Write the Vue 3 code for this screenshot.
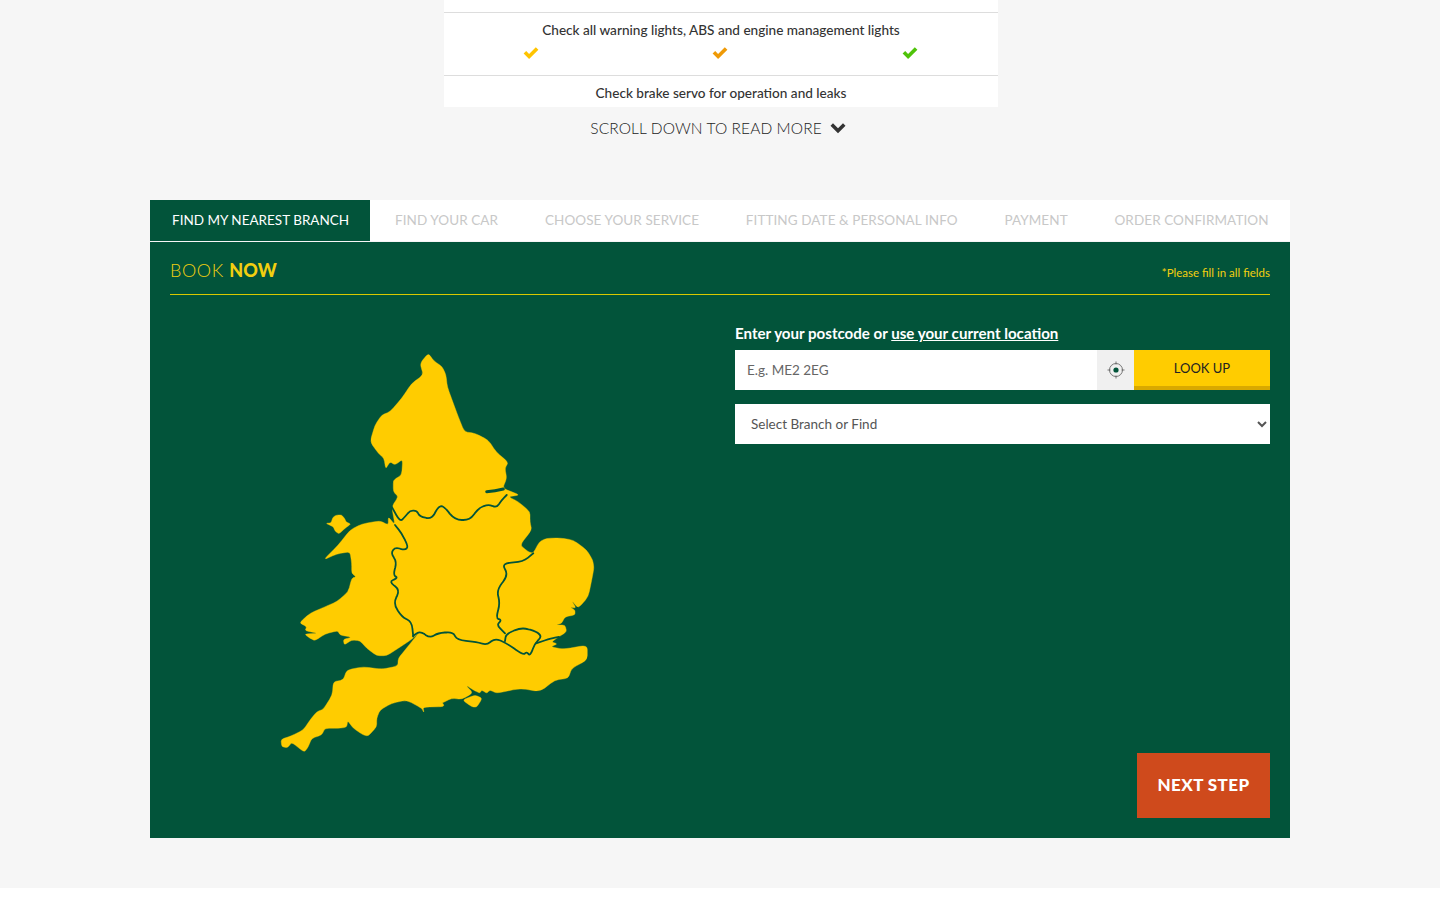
<template>
  <div class="page">
    <div class="compare-table">
      <div class="compare-row first"></div>
      <div v-for="row in rows" :key="row.label" class="compare-row">
        <div class="row-label">{{ row.label }}</div>
        <div v-if="row.ticks" class="row-ticks">
          <svg v-for="colour in tickColours" :key="colour" class="tick" viewBox="0 0 16 13">
            <path d="M.6 6.6 L3.2 4 L6.1 6.9 L12.8 .2 L15.4 2.8 L6.1 12.1 Z" :fill="colour" />
          </svg>
        </div>
      </div>
    </div>

    <div class="scroll-more">
      <span>SCROLL DOWN TO READ MORE</span>
      <svg class="scroll-chevron" viewBox="0 0 16 12">
        <path d="M.5 3.8 L3 1.3 L8 6.3 L13 1.3 L15.5 3.8 L8 11.3 Z" fill="#333" />
      </svg>
    </div>

    <div class="booking">
      <div class="tabs">
        <div v-for="(tab, index) in tabs" :key="tab" class="tab" :class="{ active: index === 0 }">{{ tab }}</div>
      </div>

      <div class="panel">
        <div class="panel-header">
          <h2 class="panel-title">BOOK <b>NOW</b></h2>
          <span class="panel-note">*Please fill in all fields</span>
        </div>

        <div class="panel-body">
          <div class="map-col">
            <!-- viewBox is in page pixels so the outline can be read straight off the reference -->
            <svg class="map" viewBox="270 340 340 420">
              <path v-for="(d, i) in landPaths" :key="i" class="land" :d="d" />
              <g class="borders">
                <path v-for="(d, i) in borderPaths" :key="i" :d="d" />
                <path class="humber" d="M486.7 491.7 Q495 491 503.3 489" />
              </g>
            </svg>
          </div>

          <div class="form-col">
            <label class="postcode-label">Enter your postcode or <u>use your current location</u></label>
            <div class="postcode-row">
              <input class="postcode-input" type="text" placeholder="E.g. ME2 2EG" />
              <div class="locate">
                <svg viewBox="0 0 20 20" width="20" height="20">
                  <circle cx="10" cy="10" r="6.5" fill="none" stroke="#666" stroke-width=".9" />
                  <circle cx="10" cy="10" r="2.6" fill="#02543a" />
                  <path d="M10 1.5 V4.5 M10 15.5 V18.5 M1.5 10 H4.5 M15.5 10 H18.5" stroke="#666" stroke-width=".9" />
                </svg>
              </div>
              <button class="lookup" type="button">LOOK UP</button>
            </div>
            <select class="branch-select">
              <option>Select Branch or Find</option>
            </select>
            <button class="next-step" type="button">NEXT STEP</button>
          </div>
        </div>
      </div>
    </div>

    <div class="footer"></div>
  </div>
</template>

<script setup>
const rows = [
  { label: 'Check all warning lights, ABS and engine management lights', ticks: true },
  { label: 'Check brake servo for operation and leaks', ticks: false }
]

const tickColours = ['#ffc400', '#ef9a07', '#4fc30a']

const tabs = [
  'FIND MY NEAREST BRANCH',
  'FIND YOUR CAR',
  'CHOOSE YOUR SERVICE',
  'FITTING DATE & PERSONAL INFO',
  'PAYMENT',
  'ORDER CONFIRMATION'
]

// map points in page pixels
const mainland = '428.3 353.3 434 361 442.3 366.7 446 375 447.3 386.7 453.3 403.3 458.3 416.7 464.3 431.7 475 433.3 488.3 440 496 451.7 508.3 462.3 505 468.3 506.7 478.3 502.7 488.3 520 495 508.3 496.7 518.3 501.7 530 511.7 530 521.7 531.7 530 520 545 528.3 551.7 533.3 553.3 539.3 541.7 546.7 538.3 560 538 573.3 540 586.7 550 592.7 560 594 568 591.7 580 588.3 596.7 578.3 608.3 571.7 600.7 576 608 570 607.3 575 610 575 615 565 616.7 561.7 623.3 556 625 565 625 566.7 631.7 558.3 637.3 551.7 641.7 557.3 644 550.7 646.7 563.3 649.3 587.3 645 587.3 660 571.7 668.3 568.3 678.3 555 680 540 691.7 520 688.3 496.7 693.3 490 690 486.7 693.3 481.7 690 480 693 475 691 465.7 685 473 693 461.7 699.3 451.7 698.3 441.7 703.3 440 699.3 445 706.7 423 707 424 712.7 421.7 708.3 406.7 700 391.7 703.3 380 710 376.7 718.3 376.7 726.7 368.3 736 363.3 735 353.3 728.3 347.7 720.7 346.7 727.3 338.3 728.3 325 728.3 321.7 735 311.7 738.3 308.3 746.7 304.3 752.3 291.7 742.3 287.7 747.7 281.7 746.7 281 739.3 291 736 303.3 730 310 720 316.7 711.7 323.3 709.3 332.3 695 333.3 681.7 343.3 680 346.7 670 363.3 666.7 381.7 669.3 397.7 666 398.3 658.3 405 650 411.7 641.7 421 630 413.3 638.3 398.3 648.3 386.7 655.7 376.7 655.7 366.7 648.3 360 640.7 351.7 640 344.3 645 343.3 639.3 351.7 637.3 340 635 337.7 630.7 325 634 315 640.7 310 638.3 304.3 634 317.7 633.3 305 630.7 306.7 626.7 299.3 622.7 310 613.3 325 606.7 336.7 601.7 348.3 591.7 351.7 578.3 356 576.7 351.7 573.3 351.7 563.3 350 551.7 336.7 554 323.3 560 338.3 545 350 530 361.7 524 380 520.7 388.3 525 388.3 516.7 395 525 391.7 506.7 398.3 496.7 393.3 491.7 393.3 480 401.7 475 402.7 459.3 395 465 390 461.7 385.7 469 384 458.3 378.3 453.3 370 441.7 375 425 381.7 415 390 411.7 401.7 398.3 411.7 383.3 423.3 375 420 363.3'
const anglesey = '325.7 523.3 331 523 333 517 337 515 341.7 515 345 519 346 522 351 524 345 528.3 339 534 335 531 333.3 526.7'
const wight = '462.3 700 475 695 482.3 698.3 476.7 707.3 471.7 706.7'

const borders = [
  '391.7 506.7 400 521.7 405 516.7 410 510.7 416.7 510.7 420 516.7 431.7 519 438.3 506.7 443.3 505.7 455 520 470 520 478.3 508.3 488.3 504.3 496.7 507.7 501.7 500 506.7 495',
  '395 525 401.7 533.3 408.3 546.7 405 550 395 547.3 391 553.3 396.7 561.7 393.3 575 398 578 389 581.7 400 590 393.3 603.3 401.7 616.7 411.7 621.7 413.3 636.7',
  '413 636 420 631 430 638 438 633 453 632 457 640 477 642 486.7 645 495 638.3 506.7 643.3 523.3 655 526.7 651.7 530 656 535 643.3 541.7 636.7 536.7 631.7 521.7 627.3 506 634 505 641',
  '533.3 553.3 523.3 561.7 501.7 563.3 508.3 575 496.7 590 500 603.3 496 618.3 501.7 620 496.7 625 505 633.3',
  '536 643.3 551.7 638.3 559 637'
]

// rounds each corner a little: the reference outline is soft, not polygonal
function roundedPath(list, closed, cut = 0.3) {
  const nums = list.split(' ').map(Number)
  const pts = []
  for (let i = 0; i < nums.length; i += 2) pts.push([nums[i], nums[i + 1]])
  const toward = (a, b, t) => [a[0] + (b[0] - a[0]) * t, a[1] + (b[1] - a[1]) * t]
  const fmt = p => p[0].toFixed(1) + ' ' + p[1].toFixed(1)
  const n = pts.length
  let d = ''
  pts.forEach((p, i) => {
    if (!closed && (i === 0 || i === n - 1)) {
      d += (i === 0 ? 'M' : 'L') + fmt(p) + ' '
      return
    }
    const before = toward(p, pts[(i - 1 + n) % n], cut)
    const after = toward(p, pts[(i + 1) % n], cut)
    d += (d ? 'L' : 'M') + fmt(before) + ' Q' + fmt(p) + ' ' + fmt(after) + ' '
  })
  return d + (closed ? 'Z' : '')
}

const landPaths = [mainland, anglesey, wight].map(p => roundedPath(p, true))
const borderPaths = borders.map(p => roundedPath(p, false, 0.45))
</script>

<style>
html, body {
  margin: 0;
  background: #fff;
}
</style>

<style scoped>
.page {
  font-family: Lato, "Liberation Sans", sans-serif;
  color: #333;
  height: 900px;
  overflow: hidden;
  background: #f6f6f6;
  display: flex;
  flex-direction: column;
  align-items: center;
}

/* comparison table */
.compare-table {
  width: 554px;
  height: 107px;
  margin-left: 2px;
  background: #fff;
  overflow: hidden;
  flex-shrink: 0;
}

.compare-row {
  height: 54px;
  border-bottom: 1px solid #ddd;
  padding-top: 8px;
  text-align: center;
}

.compare-row.first {
  height: 12px;
  padding: 0;
}

.row-label {
  font-size: 13.6px;
  line-height: 18px;
  font-weight: 500;
  color: #333;
}

.row-ticks {
  display: grid;
  grid-template-columns: repeat(3, 1fr);
  justify-items: center;
  width: 569px;
  margin: 8px 0 0 -8px;
}

.tick {
  width: 16px;
  height: 13px;
}

.scroll-more {
  height: 42px;
  display: flex;
  align-items: center;
  gap: 8px;
  font-size: 15.5px;
  font-weight: 300;
  letter-spacing: .1px;
  color: #222;
  margin: 0 4px 51px 0;
  flex-shrink: 0;
  padding-bottom: 1px;
  box-sizing: border-box;
}

.scroll-chevron {
  width: 16px;
  height: 12px;
}

/* booking */
.booking {
  width: 1140px;
  flex-shrink: 0;
}

.tabs {
  display: flex;
  background: #fff;
  height: 41px;
  margin-bottom: 1px;
}

.tab {
  padding: 0 23.4px;
  font-size: 13.5px;
  letter-spacing: .08px;
  line-height: 40px;
  color: #c8c8c8;
  white-space: nowrap;
}

.tab.active {
  background: #02543a;
  color: #fff;
  padding: 0 22px;
  width: 176px;
  margin-right: 1.6px;
  letter-spacing: 0;
}

.panel {
  background: #02543a;
  padding: 0 20px 20px;
  height: 596px;
  box-sizing: border-box;
}

.panel-header {
  height: 53px;
  border-bottom: 1px solid #d8c800;
  box-sizing: border-box;
  display: flex;
  justify-content: space-between;
  align-items: center;
  padding-top: 4px;
}

.panel-title {
  margin: 0;
  font-size: 18px;
  font-weight: 300;
  letter-spacing: .6px;
  color: #f2cf10;
}

.panel-title b {
  font-weight: 900;
  letter-spacing: .2px;
}

.panel-note {
  font-size: 11.5px;
  color: #f2cf10;
  padding-top: 4px;
}

.panel-body {
  display: flex;
  height: 523px;
}

.map-col {
  width: 565px;
  flex-shrink: 0;
}

.map {
  display: block;
  width: 340px;
  height: 420px;
  margin: 45px 0 0 100px;
}

.land {
  fill: #ffcc00;
  stroke: #ffcc00;
  stroke-width: .4;
  stroke-linejoin: round;
}

.borders path {
  fill: none;
  stroke: #02543a;
  stroke-width: 1.8;
  stroke-linejoin: round;
  stroke-linecap: round;
}

.borders .humber {
  stroke-width: 3;
}

.form-col {
  flex: 1;
  display: flex;
  flex-direction: column;
}

.postcode-label {
  margin-top: 28px;
  height: 27px;
  line-height: 20px;
  font-size: 15.1px;
  font-weight: 700;
  color: #fff;
}

.postcode-row {
  display: flex;
  height: 40px;
}

.postcode-input {
  flex: 1;
  min-width: 0;
  border: 0;
  outline: 0;
  padding: 0 12px;
  font-family: inherit;
  font-size: 13.5px;
  background: #fff;
  color: #555;
}

.postcode-input::placeholder {
  color: #666;
  opacity: 1;
}

.locate {
  width: 37px;
  background: #f0f0f0;
  display: flex;
  align-items: center;
  justify-content: center;
}

.lookup {
  width: 136px;
  border: 0;
  border-bottom: 4px solid #d9a900;
  background: #ffcc00;
  font-family: inherit;
  font-size: 13px;
  color: #222;
  padding: 0;
}

.branch-select {
  margin-top: 14px;
  height: 40px;
  border: 0;
  border-radius: 0;
  outline: 0;
  background: #fff;
  padding: 0 12px;
  font-family: inherit;
  font-size: 13.5px;
  color: #555;
}

.next-step {
  margin-top: auto;
  align-self: flex-end;
  width: 133px;
  height: 65px;
  border: 0;
  background: #cf4a1c;
  color: #fff;
  font-family: inherit;
  font-size: 17px;
  letter-spacing: .4px;
  font-weight: 900;
  padding: 0 0 2px;
}

.footer {
  position: absolute;
  left: 0;
  right: 0;
  top: 888px;
  height: 12px;
  background: #fff;
}
</style>
